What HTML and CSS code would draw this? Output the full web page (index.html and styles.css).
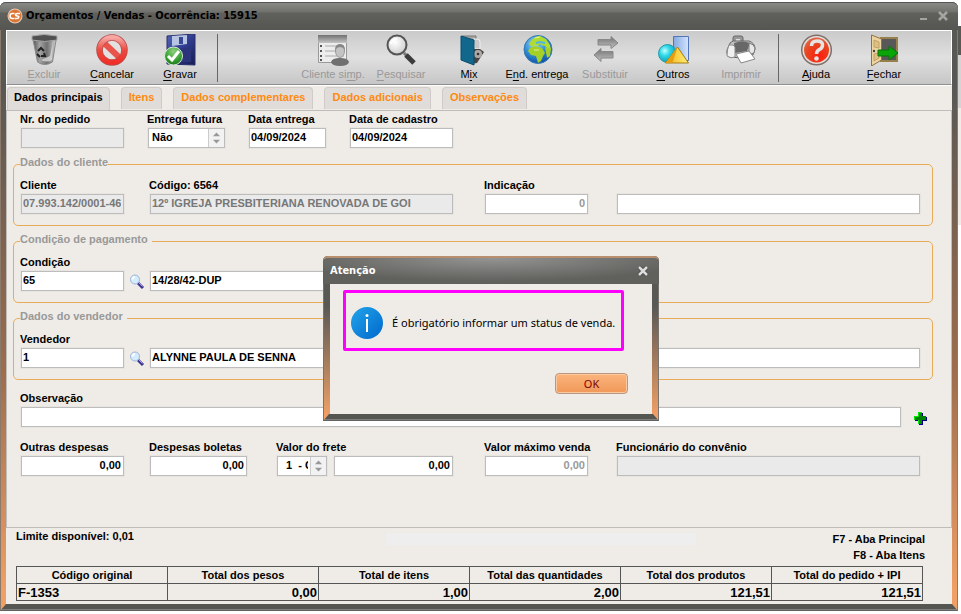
FILE: index.html
```html
<!DOCTYPE html>
<html lang="pt-BR">
<head>
<meta charset="utf-8">
<title>Orçamentos / Vendas</title>
<link rel="stylesheet" href="styles.css">
</head>
<body>
<svg class="defs" aria-hidden="true">
  <defs>
    <linearGradient id="metal" x1="0" x2="1"><stop offset="0" stop-color="#4c4c4c"/><stop offset=".3" stop-color="#a4a4a4"/><stop offset=".6" stop-color="#707070"/><stop offset="1" stop-color="#d4d4d4"/></linearGradient>
    <linearGradient id="red" x1="0" y1="0" x2="0" y2="1"><stop offset="0" stop-color="#f8a8a4"/><stop offset=".5" stop-color="#ea4a40"/><stop offset="1" stop-color="#f03028"/></linearGradient>
    <linearGradient id="navy" x1="0" y1="0" x2="1" y2="1"><stop offset="0" stop-color="#5464b4"/><stop offset=".5" stop-color="#303c90"/><stop offset="1" stop-color="#181c50"/></linearGradient>
    <radialGradient id="green" cx=".5" cy=".25" r=".8"><stop offset="0" stop-color="#8ed080"/><stop offset=".6" stop-color="#38a030"/><stop offset="1" stop-color="#187018"/></radialGradient>
    <radialGradient id="ocean" cx=".4" cy=".3" r=".75"><stop offset="0" stop-color="#a8dcf4"/><stop offset=".5" stop-color="#3490d4"/><stop offset="1" stop-color="#0c48a0"/></radialGradient>
    <radialGradient id="glass" cx=".4" cy=".35" r=".7"><stop offset="0" stop-color="#fff"/><stop offset="1" stop-color="#ccc"/></radialGradient>
    <radialGradient id="cyan" cx=".35" cy=".35" r=".7"><stop offset="0" stop-color="#c0ffff"/><stop offset=".4" stop-color="#30d8e8"/><stop offset="1" stop-color="#0898b0"/></radialGradient>
    <linearGradient id="sky" x1="0" x2="1"><stop offset="0" stop-color="#84a8e0"/><stop offset="1" stop-color="#d4e4fc"/></linearGradient>
    <linearGradient id="gold" x1="0" x2="1"><stop offset="0" stop-color="#f0b010"/><stop offset="1" stop-color="#fff07c"/></linearGradient>
    <linearGradient id="grey" x1="0" y1="0" x2="0" y2="1"><stop offset="0" stop-color="#707070"/><stop offset="1" stop-color="#c4c4c4"/></linearGradient>
    <radialGradient id="help" cx=".6" cy=".75" r=".8"><stop offset="0" stop-color="#ff1c0c"/><stop offset=".6" stop-color="#e84420"/><stop offset="1" stop-color="#e06848"/></radialGradient>
    <linearGradient id="info" x1="0" y1="0" x2="1" y2="1"><stop offset="0" stop-color="#22a4ea"/><stop offset="1" stop-color="#0068cc"/></linearGradient>
    <symbol id="lens" viewBox="0 0 16 16">
      <path d="M9 9l5 5" stroke="#3c3490" stroke-width="3"/><path d="M9.500 8.500l4 4" stroke="#a8a0e0"/>
      <circle cx="6" cy="5.500" r="4.500" fill="#d4ecff" stroke="#9cb4d8"/><path d="M3.500 5.500a2.500 2.500 0 0 1 2.500-2.500" stroke="#fff" stroke-width="2" fill="none"/>
    </symbol>
  </defs>
</svg>

<main class="window">
  <header class="titlebar">
    <svg class="logo" viewBox="0 0 16 16" aria-hidden="true"><circle cx="8" cy="8" r="7.500" fill="#e8cdb4"/><circle cx="8" cy="8" r="6.500" fill="#dc7634"/><path d="M7.500 5.500H5.300Q3 5.500 3 8t2.300 2.500H7M13 5.500H10.200Q8.500 5.500 8.500 6.700T10.200 8 11.800 9.300 10 10.500H7.500" fill="none" stroke="#fff" stroke-width="1.600"/></svg>
    <h1>Orçamentos / Vendas - Ocorrência: 15915</h1>
    <button class="caption" aria-label="Minimizar"><svg viewBox="0 0 12 12"><path d="M2 9h7" stroke="#a4a4a2" stroke-width="2"/></svg></button>
    <button class="caption" aria-label="Fechar janela"><svg viewBox="0 0 12 12"><path d="M2 2l8 8M10 2l-8 8" stroke="#a4a4a2" stroke-width="2.500"/></svg></button>
  </header>

  <nav class="toolbar" aria-label="Ações">
    <button class="tool" disabled>
      <svg viewBox="0 0 32 32"><path d="M4.500 3h24l-4 25q-8 5-15 0z" fill="url(#metal)" stroke="#888"/><path d="M4 2q12-3 25 0v4q-12 3-25 0z" fill="#505050" stroke="#a8a8a8"/><path d="M25 8l-3 14-9 4q6 3 11 0z" fill="#ddd" opacity=".75"/><path d="M10 17l3-3 3 3M16 19l1 3h-4M12 23l-3-3" fill="none" stroke="#222" stroke-width="2"/></svg>
      <span><u>E</u>xcluir</span></button>
    <button class="tool">
      <svg viewBox="0 0 32 32"><circle cx="16" cy="16" r="12.500" fill="#e4e0e0"/><path d="M7 8l18 17" stroke="#e8544c" stroke-width="6"/><circle cx="16" cy="16" r="12.500" fill="none" stroke="#b84c48" stroke-width="6.500"/><circle cx="16" cy="16" r="12.500" fill="none" stroke="url(#red)" stroke-width="5"/></svg>
      <span><u>C</u>ancelar</span></button>
    <button class="tool">
      <svg viewBox="0 0 32 32"><path d="M3 2l28-2v31l-28-1z" fill="url(#navy)" stroke="#28306c"/><path d="M8 2l15-1v9l-15 2z" fill="#b8c4e4"/><path d="M15 3h4v7h-4z" fill="#384890"/><path d="M6 15l21-1v14H6z" fill="#2c347c"/><circle cx="9.500" cy="22" r="9" fill="url(#green)" stroke="#d8ead4"/><path d="M4 22l4 4 7-9" fill="none" stroke="#fff" stroke-width="3"/></svg>
      <span><u>G</u>ravar</span></button>
    <hr class="rule wide">
    <button class="tool" disabled>
      <svg viewBox="0 0 32 32"><path d="M1.500 1.500h28v27h-28z" fill="#ededed" stroke="#999"/><path d="M1 1h29v8H1z" fill="url(#grey)"/><path d="M3 12h2M3 17h2M3 22h2M3 26h2" stroke="#555" stroke-width="2"/><path d="M8 12h19M8 17h19M8 22h19" stroke="#aaa"/><path d="M14 28q1-4 9-4t9 4q-1 4-9 4t-9-4z" fill="#707070"/><ellipse cx="23" cy="17" rx="4.500" ry="6.500" fill="#c4c4c4" stroke="#999"/><path d="M18 16q0-6 5-6t5 6q-2-3-5-3t-5 3" fill="#888"/></svg>
      <span>Cliente si<u>m</u>p.</span></button>
    <button class="tool" disabled>
      <svg viewBox="0 0 32 32"><path d="M19 19l4 4" stroke="#777" stroke-width="3"/><path d="M21 21l8 8" stroke="#3c3c3c" stroke-width="5"/><circle cx="12" cy="11" r="9.500" fill="url(#glass)" stroke="#555" stroke-width="2"/><path d="M6 10q1-5 6-5" fill="none" stroke="#fff" stroke-width="2"/></svg>
      <span><u>P</u>esquisar</span></button>
    <button class="tool">
      <svg viewBox="0 0 32 32"><path d="M9 2h14v25H12z" fill="#a8a8a8" stroke="#777"/><path d="M20 5h4q3 0 3 3v7h-5z" fill="#c8c8c8" stroke="#eee"/><path d="M21 15h6l4 3-7 11-6 1z" fill="#484644"/><circle cx="25" cy="20" r="4" fill="#b0a8a4"/><circle cx="25" cy="20" r="1.300" fill="#333"/><path d="M8 2l13 4v25L8 26z" fill="#12688c" stroke="#0a4c6c"/></svg>
      <span>M<u>i</u>x</span></button>
    <button class="tool">
      <svg viewBox="0 0 32 32"><circle cx="17" cy="15.500" r="14" fill="url(#ocean)" stroke="#347cb8"/><path d="M10 7q4-5 9-5l6 3 4 6 1 5-3-1-3-3-4-1-3 1-3-1-3 2-3-3z" fill="#b0dc30"/><path d="M9 14l5-2 7 2 3 5-2 3-2 5-3 2-2-7-5-1-3-4zM24 13l6 2-1 7-3 2z" fill="#a4d028"/><path d="M15 9l4-1 5 1M18 11l2 1" stroke="#50b4e4" stroke-width="2" fill="none"/><path d="M14 4l5-1M13 16h5" stroke="#e8f490" fill="none"/></svg>
      <span>E<u>n</u>d. entrega</span></button>
    <button class="tool" disabled>
      <svg viewBox="0 0 32 32"><path d="M9 5.500h13v-3l7 6.500-7 5.500v-3.500H9z" fill="url(#grey)" stroke="#888"/><path d="M24 17.500H12v-3L5 21l7 6.500v-3.500h12z" fill="url(#grey)" stroke="#888"/></svg>
      <span>Substituir</span></button>
    <button class="tool">
      <svg viewBox="0 0 32 32"><path d="M16.500 2.500h15v24h-15z" fill="url(#sky)" stroke="#5474b8"/><circle cx="10.500" cy="19.500" r="9" fill="url(#cyan)" stroke="#209cac"/><path d="M20.500 13l11 16h-23z" fill="url(#gold)" stroke="#a47c10"/><path d="M20.500 13l-5 16h-7z" fill="#e4a010"/></svg>
      <span><u>O</u>utros</span></button>
    <button class="tool" disabled>
      <svg viewBox="0 0 32 32"><path d="M8 10V4q0-2 2-2h6q2 0 2 2v6z" fill="#999" stroke="#666"/><path d="M11 5h4v3h-4z" fill="#ddd"/><path d="M5 9Q8 6 12 7l12 0q6 2 6 8l-2 6-11 3-13-1q-3-3-2-7z" fill="#c4c4c4" stroke="#666"/><path d="M9 9q8-3 16 0l-3 8-12 2z" fill="#686868"/><path d="M4 11q5-1 6 2v10q-4 2-8-1 0-7 2-11z" fill="#f0f0f0" stroke="#888"/><path d="M24 9q5 1 6 5l-1 5q-3 2-5-1z" fill="#e8e8e8" stroke="#777"/><path d="M11 20l13-3 6 8-14 4z" fill="#fff" stroke="#888"/></svg>
      <span>Imprimir</span></button>
    <hr class="rule">
    <button class="tool">
      <svg viewBox="0 0 32 32"><circle cx="16.500" cy="16" r="14.800" fill="#e4dcd8" stroke="#80706c" stroke-width="1.500"/><circle cx="16.500" cy="16" r="12.500" fill="url(#help)"/><path d="M11.500 12q0-5 5.500-5t5.500 4q0 3-3 4.500-3 1.500-3 4.500" fill="none" stroke="#e4e4e4" stroke-width="3.500"/><circle cx="16.500" cy="24.500" r="2.300" fill="#e4e4e4"/></svg>
      <span><u>A</u>juda</span></button>
    <button class="tool">
      <svg viewBox="0 0 32 32"><path d="M13 4h16v23H13z" fill="#585858" stroke="#98804c" stroke-width="2"/><path d="M3.500 1l10 4v21l-10 6z" fill="#ecd4a0" stroke="#947040"/><path d="M6 6l5 2v6l-5-1zM6 20l5-1v5l-5 3z" fill="#e0c080" stroke="#c0a068"/><circle cx="6" cy="17" r="1.200" fill="#444"/><path d="M10 16h11v-4l9 7-9 7v-4H10z" fill="#08a408" stroke="#087408"/></svg>
      <span><u>F</u>echar</span></button>
  </nav>

  <div class="tabs" role="tablist">
    <button class="tab active" role="tab" aria-selected="true">Dados principais</button>
    <button class="tab" role="tab">Itens</button>
    <button class="tab" role="tab">Dados complementares</button>
    <button class="tab" role="tab">Dados adicionais</button>
    <button class="tab" role="tab">Observações</button>
  </div>

  <form class="panel" role="tabpanel">
    <div class="top-row">
      <div class="field code"><label for="pedido">Nr. do pedido</label><input id="pedido" disabled></div>
      <div class="field short"><label for="entrega-futura">Entrega futura</label>
        <div class="select"><select id="entrega-futura"><option>Não</option></select><svg viewBox="0 0 16 20" aria-hidden="true"><path d="M4 8l4-4 4 4zM4 12l4 4 4-4z"/></svg></div></div>
      <div class="field short"><label for="data-entrega">Data entrega</label><input id="data-entrega" value="04/09/2024"></div>
      <div class="field code"><label for="data-cadastro">Data de cadastro</label><input id="data-cadastro" value="04/09/2024"></div>
    </div>

    <fieldset>
      <legend>Dados do cliente</legend>
      <div class="grid">
        <div class="field c-code"><label for="cliente">Cliente</label><input id="cliente" value="07.993.142/0001-46" disabled></div>
        <div class="field c-name"><label for="nome">Código: 6564</label><input id="nome" value="12º IGREJA PRESBITERIANA RENOVADA DE GOI" disabled></div>
        <div class="field c-code2"><label for="indicacao">Indicação</label><input id="indicacao" class="num muted" value="0"></div>
        <div class="field c-name2"><input aria-label="Nome da indicação"></div>
      </div>
    </fieldset>

    <fieldset>
      <legend class="spaced">Condição de pagamento</legend>
      <div class="grid">
        <div class="field c-code"><label for="condicao">Condição</label><input id="condicao" value="65"></div>
        <button type="button" class="search" aria-label="Pesquisar condição"><svg><use href="#lens"/></svg></button>
        <div class="field c-name"><input aria-label="Descrição da condição" value="14/28/42-DUP"></div>
      </div>
    </fieldset>

    <fieldset>
      <legend class="spaced">Dados do vendedor</legend>
      <div class="grid">
        <div class="field c-code"><label for="vendedor">Vendedor</label><input id="vendedor" value="1"></div>
        <button type="button" class="search" aria-label="Pesquisar vendedor"><svg><use href="#lens"/></svg></button>
        <div class="field c-full"><input aria-label="Nome do vendedor" value="ALYNNE PAULA DE SENNA"></div>
      </div>
    </fieldset>

    <div class="note-row">
      <div class="field grow"><label for="observacao">Observação</label><input id="observacao"></div>
      <button type="button" class="add" aria-label="Adicionar"><svg viewBox="0 0 13 13"><path d="M5 1h4v4h4v4H9v4H5V9H1V5h4z" fill="#000080"/><path d="M4 0h4v4h4v4H8v4H4V8H0V4h4z" fill="#008000"/><path d="M8 .500H4.500v4H.500V8M4.500 8v4" fill="none" stroke="#00f000"/></svg></button>
    </div>

    <div class="grid values">
      <div class="field c-code"><label for="outras">Outras despesas</label><input id="outras" class="num" value="0,00"></div>
      <div class="c-name charges">
        <div class="field boleta"><label for="boletas">Despesas boletas</label><input id="boletas" class="num" value="0,00"></div>
        <div class="field grow"><label for="frete">Valor do frete</label>
          <div class="freight">
            <div class="select narrow"><select aria-label="Tipo de frete"><option>1&nbsp; - CIF</option></select><svg viewBox="0 0 16 20" aria-hidden="true"><path d="M4 8l4-4 4 4zM4 12l4 4 4-4z"/></svg></div>
            <input id="frete" class="num" value="0,00">
          </div></div>
      </div>
      <div class="field c-code2"><label for="maximo">Valor máximo venda</label><input id="maximo" class="num muted" value="0,00"></div>
      <div class="field c-name2"><label for="funcionario">Funcionário do convênio</label><input id="funcionario" disabled></div>
    </div>
  </form>

  <footer class="footer">
    <div class="status">
      <p>Limite disponível: 0,01</p>
      <div class="progress"></div>
      <p class="keys">F7 - Aba Principal<br>F8 - Aba Itens</p>
    </div>
    <table>
      <thead><tr><th>Código original</th><th>Total dos pesos</th><th>Total de itens</th><th>Total das quantidades</th><th>Total dos produtos</th><th>Total do pedido + IPI</th></tr></thead>
      <tbody><tr><td class="first">F-1353</td><td>0,00</td><td>1,00</td><td>2,00</td><td>121,51</td><td>121,51</td></tr></tbody>
    </table>
  </footer>

  <section class="dialog" role="dialog" aria-labelledby="dialog-title">
    <header class="dialog-title"><h2 id="dialog-title">Atenção</h2>
      <button class="caption" aria-label="Fechar aviso"><svg viewBox="0 0 12 12"><path d="M2 2l8 8M10 2l-8 8" stroke="#444" stroke-width="4"/><path d="M2 2l8 8M10 2l-8 8" stroke="#dcdcdc" stroke-width="2.500"/></svg></button></header>
    <div class="dialog-body">
      <div class="message">
        <svg viewBox="0 0 32 32" aria-hidden="true"><circle cx="16" cy="16" r="16" fill="url(#info)"/><path d="M16 12v13" stroke="#fff" stroke-width="2"/><circle cx="16" cy="8.500" r="1.500" fill="#fff"/></svg>
        <p>É obrigatório informar um status de venda.</p>
      </div>
      <button class="ok">OK</button>
    </div>
  </section>
</main>
</body>
</html>
```
FILE: styles.css
```css
* { box-sizing: border-box; }
body {
  margin: 0;
  padding: 2px 3px 3px 0;
  min-height: 100vh;
  display: flex;
  background: linear-gradient(#fff 26px, #585855 26px, #585855 55px, #d4d4d4 55px, #d4d4d4 108px, #efece7 108px, #efece7 225px, #fff 225px);
  font: bold 11px/16px "Liberation Sans", Arial, sans-serif;
  color: #000;
}
h1, h2, p { margin: 0; font-size: 11px; }
button, input, select { font: inherit; color: inherit; margin: 0; }
button { border: 0; padding: 0; background: none; }
svg { display: block; }
.defs { position: absolute; width: 0; height: 0; }

/* Window frame */
.window {
  position: relative;
  flex: 1;
  min-width: 0;
  display: flex;
  flex-direction: column;
  padding: 0 6px 7px;
  border-radius: 6px 6px 0 0;
  background: linear-gradient(#585855 0, #585855 80px, #9c6c4c 60%, #f0a065 97%);
  box-shadow: inset 1px 0 #8a7a6c, inset -1px 0 #8a7a6c;
}
.window::after, .dialog::after {
  content: "";
  position: absolute;
  left: 0;
  right: 0;
  bottom: 0;
  height: 7px;
  background: linear-gradient(#555552 5px, #8c8c8a 5px, #555552 7px);
  clip-path: polygon(6px 0, calc(100% - 6px) 0, 100% 100%, 0 100%);
}
.titlebar {
  height: 28px;
  margin: 0 -6px;
  padding: 0 9px 1px 7px;
  display: flex;
  align-items: center;
  gap: 3px;
  border-top: 1px solid #555;
  border-radius: 6px 6px 0 0;
  background: linear-gradient(#898985, #70706d 9px, #60605d 10px, #555552);
}
.titlebar h1, .dialog h2 { flex: 1; font-family: "DejaVu Sans Condensed", "DejaVu Sans", sans-serif; }
.logo { width: 16px; height: 16px; }
.caption { width: 12px; height: 12px; margin-left: 4px; }

/* Toolbar */
.toolbar {
  height: 55px;
  padding: 3px 0 0 3px;
  display: flex;
  border: 1px solid #fff;
  border-bottom-color: #8f8f8f;
  background: linear-gradient(#cacaca, #e0e0e0 50%, #c6c6c6);
  font-weight: normal;
}
.tool {
  width: 68px;
  height: 48px;
  display: flex;
  flex-direction: column;
  align-items: center;
}
.tool svg { width: 32px; height: 32px; }
.tool:disabled { color: #999; }
.tool u { text-underline-offset: 2px; }
.rule { width: 1px; height: 48px; margin: 0 3px; border: 0; background: #666; }
.wide { margin-right: 81px; }

/* Tabs */
.tabs {
  height: 25px;
  padding: 1px 1px 0;
  display: flex;
  gap: 11px;
  background: #efece7;
  border-top: 1px solid #fff;
}
.tab {
  height: 22px;
  padding: 0 7px 3px;
  border: 1px solid #cfcbc8;
  border-bottom: 0;
  border-radius: 4px 4px 0 0;
  background: #dfdcda;
  color: #ff8a10;
}
.tab.active { height: 23px; padding: 0 6px 4px; color: #000; }

/* Form */
.panel {
  flex: 1;
  padding: 0 18px 0 6px;
  display: flex;
  flex-direction: column;
  background: #efece7;
  border: 1px solid #bfbdba;
}
.field { min-width: 0; display: flex; flex-direction: column; justify-content: flex-end; gap: 1px; }
.field label { white-space: nowrap; margin-left: -1px; }
.field input, .select {
  width: 100%;
  height: 20px;
  border: 1px solid #bcbcbc;
  background: #fff;
  box-shadow: 0 0 0 1px #e8e5e1;
}
.field input { padding: 0 2px 2px 1px; border-radius: 0; }
.field input:disabled { background: #eaeaea; color: #777; }
.field .muted { color: #999; }
.field .num { text-align: right; }
.select { position: relative; overflow: hidden; }
.select select {
  width: 100%;
  height: 18px;
  padding: 0 18px 2px 3px;
  border: 0;
  background: none;
  appearance: none;
}
.select svg {
  position: absolute;
  top: 0;
  right: 0;
  width: 16px;
  height: 18px;
  background: #f2f2f2;
  border-left: 1px solid #ccc;
  fill: #999;
  pointer-events: none;
}
.code { width: 103px; }
.short { width: 77px; }
.top-row { display: flex; gap: 24px; padding-left: 8px; margin-bottom: 7px; }

fieldset {
  min-width: 0;
  margin: 0 0 6px;
  padding: 4px 12px 11px 7px;
  border: 1px solid #e8ac58;
  border-radius: 5px;
}
legend { margin-left: -1px; padding: 0 0 4px; line-height: 14px; color: #999; }
.spaced { padding-right: 4px; }
.grid {
  display: grid;
  grid-template-columns: 103px 26px minmax(0, 1fr) 32px 103px 29px minmax(0, 1fr);
}
.c-code { grid-column: 1; }
.c-name { grid-column: 3; }
.c-code2 { grid-column: 5; }
.c-name2 { grid-column: 7; }
.c-full { grid-column: 3 / 8; }
.search { grid-column: 2; align-self: end; justify-self: center; height: 18px; }
.search svg { width: 16px; height: 16px; }

.note-row { display: flex; align-items: flex-end; gap: 13px; margin: 4px 0 12px; padding: 0 6px 0 8px; }
.grow { flex: 1; }
.add { height: 17px; }
.add svg { width: 13px; height: 13px; }
.values { padding: 0 13px 0 8px; }
.charges { display: flex; gap: 30px; }
.boleta { width: 97px; }
.freight { display: flex; gap: 7px; }
.narrow { width: 50px; flex: none; }
.narrow select { padding-left: 8px; }

/* Footer */
.footer { padding: 0 29px 3px 10px; background: #efece7; }
.status { height: 38px; display: flex; justify-content: space-between; align-items: flex-start; }
.progress { flex: 0 1 310px; height: 12px; margin: 5px 0 0 116px; background: #eeeeee; }
.keys { margin: 3px -2px 0 0; text-align: right; }
table { width: 100%; border-collapse: collapse; table-layout: fixed; }
th, td { height: 17px; padding: 0 1px; border: 1px solid #555; line-height: 15px; }
td { font-size: 13px; text-align: right; }
.first { text-align: left; }

/* Message box */
.dialog {
  position: absolute;
  top: 254px;
  left: 323px;
  width: 336px;
  padding: 0 7px 7px;
  border-radius: 5px 5px 0 0;
  background: linear-gradient(#585855 0, #585855 30%, #f0a065 97%);
  box-shadow: inset 1px 0 #77736e, inset -1px 0 #77736e;
}
.dialog-title {
  height: 28px;
  margin: 0 -7px;
  padding: 0 10px 0 7px;
  display: flex;
  align-items: center;
  border-top: 2px solid #b89070;
  border-radius: 5px 5px 0 0;
  background: radial-gradient(ellipse 60% 90% at 50% 0, #949492, #60605d);
  color: #fff;
}
.dialog-body { padding: 6px 24px 20px 13px; background: #efece7; }
.message {
  width: 281px;
  height: 61px;
  padding: 4px 5px 0;
  display: flex;
  align-items: center;
  gap: 9px;
  border: 3px solid #ff00ff;
  border-radius: 2px;
  font-family: "Noto Sans", sans-serif;
}
.message svg { width: 32px; height: 32px; flex: none; }
.message p { font-weight: normal; white-space: nowrap; }
.ok {
  display: block;
  width: 73px;
  height: 21px;
  margin: 22px 0 0 auto;
  border: 1px solid #b89880;
  border-radius: 4px;
  background: linear-gradient(#fbb47c, #f09858);
  box-shadow: inset 0 0 0 1px #fcc8a0;
  color: #800000;
  font: 11px/16px "Noto Sans", sans-serif;
}
```
